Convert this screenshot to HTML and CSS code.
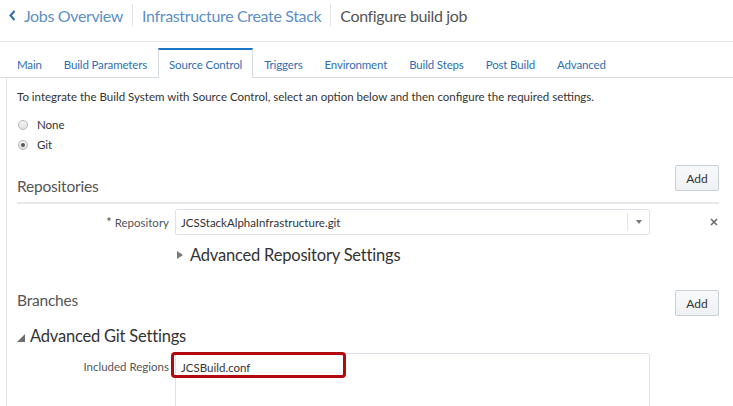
FILE: index.html
```html
<!DOCTYPE html>
<html>
<head>
<meta charset="utf-8">
<link rel="stylesheet" href="styles.css">
</head>
<body>
<header class="crumbs">
  <svg class="chev" width="7" height="11" viewBox="0 0 7 11"><path d="M5.5 1 L1.5 5.5 L5.5 10" fill="none" stroke="#2a6db5" stroke-width="2"/></svg>
  <a class="crumb link">Jobs Overview</a>
  <span class="sep"></span>
  <a class="crumb link">Infrastructure Create Stack</a>
  <span class="sep"></span>
  <span class="crumb current">Configure build job</span>
</header>

<nav class="tabs">
  <span class="tab">Main</span>
  <span class="tab">Build Parameters</span>
  <span class="tab active">Source Control</span>
  <span class="tab">Triggers</span>
  <span class="tab">Environment</span>
  <span class="tab">Build Steps</span>
  <span class="tab">Post Build</span>
  <span class="tab">Advanced</span>
</nav>

<main class="panel">
  <p class="intro">To integrate the Build System with Source Control, select an option below and then configure the required settings.</p>
  <div class="radios">
    <label class="radio"><span class="dot"></span>None</label>
    <label class="radio"><span class="dot checked"></span>Git</label>
  </div>

  <section class="sect repos">
    <h2 class="sect-title">Repositories</h2>
    <button class="btn">Add</button>
  </section>

  <div class="field repo-row">
    <label class="flabel"><span class="req">*</span> Repository</label>
    <div class="select">
      <span class="select-val">JCSStackAlphaInfrastructure.git</span>
      <span class="select-btn"><span class="caret"></span></span>
    </div>
    <svg class="remove" width="8" height="8" viewBox="0 0 8 8"><path d="M1 1 L7 7 M7 1 L1 7" stroke="#6b6b6b" stroke-width="1.6"/></svg>
  </div>

  <div class="disclosure adv-repo">
    <span class="tri-right"></span>Advanced Repository Settings
  </div>

  <section class="sect branches">
    <h2 class="sect-title">Branches</h2>
    <button class="btn">Add</button>
  </section>

  <div class="disclosure adv-git">
    <span class="tri-open"></span>Advanced Git Settings
  </div>

  <div class="field regions-row">
    <label class="flabel">Included Regions</label>
    <div class="textarea">
      <span class="ta-text">JCSBuild.conf</span>
      <span class="highlight"></span>
    </div>
  </div>
</main>
</body>
</html>
```

FILE: styles.css
```css
* { box-sizing: border-box; }
html, body { margin: 0; padding: 0; }
body {
  width: 733px;
  height: 406px;
  overflow: hidden;
  background: #fff;
  font-family: Lato, "Open Sans", sans-serif;
  color: #333;
}

.crumbs {
  height: 42px;
  border-bottom: 1px solid #e2e6ea;
  display: flex;
  align-items: center;
  padding-left: 9px;
  padding-bottom: 11px;
  font-size: 16px;
  letter-spacing: -0.35px;
}
.chev { margin-right: 8px; }
.crumb { white-space: nowrap; }
.link { color: #5d8fc4; }
.current { color: #555; }
.sep {
  width: 1px;
  height: 22px;
  background: #e3e3e3;
  margin: 0 9px;
}

.tabs {
  display: flex;
  margin-top: 6px;
  padding-left: 6px;
  border-bottom: 1px solid #d6dce2;
  height: 30px;
}
.tab {
  border: 1px solid transparent;
  border-bottom: none;
  padding: 9px 10px 0;
  font-size: 11.5px;
  letter-spacing: -0.15px;
  color: #2f6fb1;
  white-space: nowrap;
}
.tab.active {
  border-color: #d6dce2;
  border-top: 2px solid #1c74c8;
  background: #fff;
  margin-bottom: -1px;
  padding-top: 8px;
}

.panel {
  margin-left: 6px;
  border-left: 1px solid #e0e4e8;
  padding: 11px 14px 0 10px;
  height: 330px;
}
.intro {
  margin: 0;
  font-size: 11.5px;
  line-height: 16px;
  color: #333;
}
.radios {
  margin-top: 12px;
  display: flex;
  flex-direction: column;
  gap: 5px;
}
.radio {
  display: flex;
  align-items: center;
  font-size: 11.5px;
  height: 15px;
  color: #333;
}
.dot {
  width: 10px;
  height: 10px;
  border-radius: 50%;
  border: 1px solid #b5b5b5;
  background: linear-gradient(#f4f4f4, #e1e1e1);
  margin-left: 1px;
  margin-right: 9px;
  display: flex;
  align-items: center;
  justify-content: center;
}
.dot.checked::after {
  content: "";
  width: 4px;
  height: 4px;
  border-radius: 50%;
  background: #5a5a5a;
}

.sect {
  display: flex;
  justify-content: space-between;
}
.sect-title {
  margin: 0;
  font-size: 15.5px;
  letter-spacing: -0.2px;
  font-weight: 400;
  color: #555;
  line-height: 20px;
}
.btn {
  font-family: inherit;
  font-size: 12px;
  color: #333;
  height: 26px;
  width: 44px;
  border: 1px solid #c8d0d8;
  border-radius: 2px;
  background: linear-gradient(#f8f9fa, #eef1f4);
  padding: 0;
}
.repos {
  align-items: flex-end;
  margin-top: 13px;
  padding-bottom: 7px;
  border-bottom: 2px solid #e6e9ec;
}
.repos .sect-title { margin-bottom: -1px; }
.repos .btn { margin-bottom: 4px; }

.field {
  display: flex;
  align-items: center;
}
.flabel {
  width: 158px;
  flex: none;
  text-align: right;
  padding-right: 6px;
  font-size: 11.5px;
  color: #555;
  white-space: nowrap;
}
.req { color: #555; font-size: 13px; }
.repo-row { margin-top: 5px; }
.select {
  width: 475px;
  height: 26px;
  border: 1px solid #dde3e8;
  border-radius: 2px;
  display: flex;
  align-items: center;
  background: #fff;
}
.select-val {
  flex: 1;
  padding-left: 5px;
  font-size: 11.5px;
  color: #333;
}
.select-btn {
  width: 22px;
  height: 18px;
  border-left: 1px solid #e0e4e8;
  display: flex;
  align-items: center;
  justify-content: center;
}
.caret {
  width: 0;
  height: 0;
  border-left: 3.5px solid transparent;
  border-right: 3.5px solid transparent;
  border-top: 4px solid #777;
}
.remove { margin-left: 60px; }

.disclosure {
  display: flex;
  align-items: center;
  font-size: 16.5px;
  letter-spacing: -0.2px;
  color: #333;
  line-height: 22px;
}
.adv-repo { margin-top: 9px; padding-left: 160px; }
.tri-right {
  width: 0;
  height: 0;
  border-top: 4.5px solid transparent;
  border-bottom: 4.5px solid transparent;
  border-left: 6px solid #7a7a7a;
  margin-right: 7px;
}
.branches { margin-top: 24px; align-items: flex-start; }
.adv-git { margin-top: 9px; }
.tri-open {
  width: 0;
  height: 0;
  border-left: 8px solid transparent;
  border-bottom: 8px solid #6e6e6e;
  margin-right: 5px;
  margin-top: 3px;
}
.regions-row { margin-top: 6px; align-items: flex-start; }
.regions-row .flabel { padding-top: 7px; }
.textarea {
  position: relative;
  width: 475px;
  height: 60px;
  border: 1px solid #dde3e8;
  border-radius: 2px;
  padding: 7px 5px;
  font-size: 11.5px;
  color: #333;
}
.highlight {
  position: absolute;
  left: -5px;
  top: -2px;
  width: 175px;
  height: 26px;
  border: 3px solid #b3080e;
  border-radius: 4px;
}
```
